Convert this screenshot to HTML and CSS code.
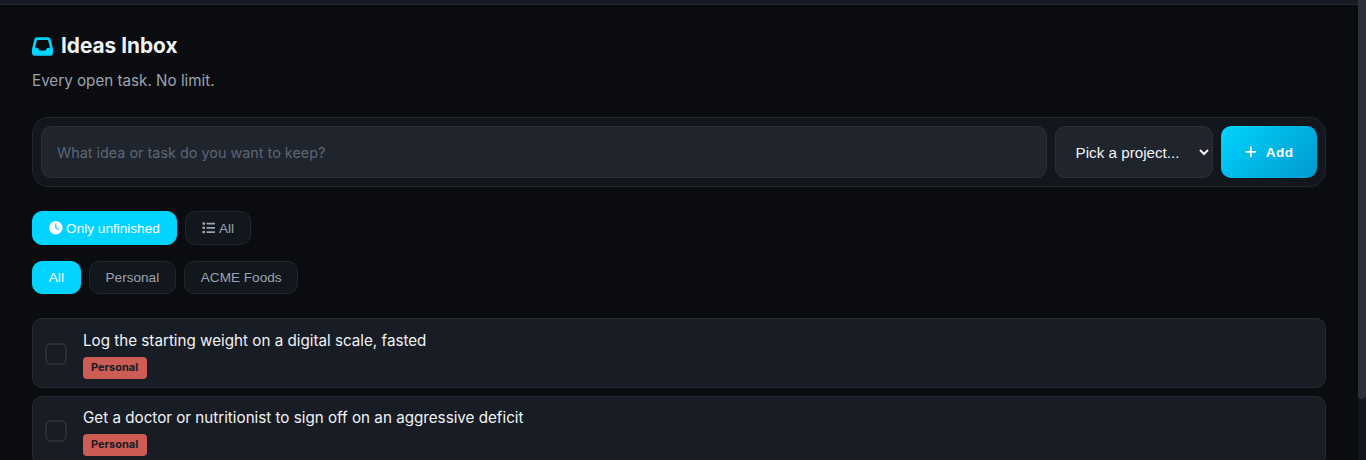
FILE: index.html
```html
<!DOCTYPE html>
<html lang="en">
<head>
    <meta charset="UTF-8">
    <meta name="viewport" content="width=device-width, initial-scale=1.0">
    <title>Ideas Inbox</title>
    <link rel="stylesheet" href="styles.css">
</head>
<body>

    <div class="view">
        <!-- Thin bar left over from the app header -->
        <div class="top-bar"></div>

        <main class="page">
            <h1 class="page-title">
                <svg class="title-icon" viewBox="0 0 512 512" aria-hidden="true"><path d="M121 32C91.6 32 66 52 58.9 80.5L1.9 308.4C.6 313.5 0 318.7 0 323.9V416c0 35.3 28.7 64 64 64H448c35.3 0 64-28.7 64-64V323.9c0-5.2-.6-10.4-1.9-15.5l-57-227.9C446 52 420.4 32 391 32H121zm0 64H391l48 192H387.8c-12.1 0-23.2 6.8-28.6 17.7l-14.3 28.6c-5.4 10.8-16.5 17.7-28.6 17.7H195.8c-12.1 0-23.2-6.8-28.6-17.7l-14.3-28.6c-5.4-10.8-16.5-17.7-28.6-17.7H73L121 96z"/></svg>
                Ideas Inbox
            </h1>
            <p class="page-sub">Every open task. No limit.</p>

            <!-- New task form -->
            <form class="add-form">
                <input class="add-input" type="text" placeholder="What idea or task do you want to keep?">
                <select class="add-select">
                    <option>Pick a project...</option>
                </select>
                <button class="add-button" type="button">
                    <svg class="plus-icon" viewBox="0 0 448 512" aria-hidden="true"><path d="M256 80c0-17.7-14.3-32-32-32s-32 14.3-32 32V224H48c-17.7 0-32 14.3-32 32s14.3 32 32 32H192V432c0 17.7 14.3 32 32 32s32-14.3 32-32V288H400c17.7 0 32-14.3 32-32s-14.3-32-32-32H256V80z"/></svg>
                    Add
                </button>
            </form>

            <!-- Filters -->
            <div class="filter-row">
                <button class="chip chip-active" type="button">
                    <svg class="chip-icon" viewBox="0 0 512 512" aria-hidden="true"><path d="M256 0a256 256 0 1 1 0 512A256 256 0 1 1 256 0zM232 120V256c0 8 4 15.5 10.7 20l96 64c11 7.4 25.9 4.4 33.3-6.7s4.4-25.9-6.7-33.3L280 243.2V120c0-13.3-10.7-24-24-24s-24 10.7-24 24z"/></svg>
                    Only unfinished
                </button>
                <button class="chip" type="button">
                    <svg class="chip-icon" viewBox="0 0 512 512" aria-hidden="true"><path d="M40 48C26.7 48 16 58.7 16 72v48c0 13.3 10.7 24 24 24H88c13.3 0 24-10.7 24-24V72c0-13.3-10.7-24-24-24H40zM192 64c-17.7 0-32 14.3-32 32s14.3 32 32 32H480c17.7 0 32-14.3 32-32s-14.3-32-32-32H192zm0 160c-17.7 0-32 14.3-32 32s14.3 32 32 32H480c17.7 0 32-14.3 32-32s-14.3-32-32-32H192zm0 160c-17.7 0-32 14.3-32 32s14.3 32 32 32H480c17.7 0 32-14.3 32-32s-14.3-32-32-32H192zM16 232v48c0 13.3 10.7 24 24 24H88c13.3 0 24-10.7 24-24V232c0-13.3-10.7-24-24-24H40c-13.3 0-24 10.7-24 24zM40 368c-13.3 0-24 10.7-24 24v48c0 13.3 10.7 24 24 24H88c13.3 0 24-10.7 24-24V392c0-13.3-10.7-24-24-24H40z"/></svg>
                    All
                </button>
            </div>
            <div class="filter-row project-row">
                <button class="chip chip-pad chip-active" type="button">All</button>
                <button class="chip chip-pad" type="button">Personal</button>
                <button class="chip chip-pad" type="button">ACME Foods</button>
            </div>

            <!-- Task list -->
            <ul class="task-list">
                <li class="task">
                    <span class="task-check"></span>
                    <div class="task-body">
                        <div class="task-text">Log the starting weight on a digital scale, fasted</div>
                        <span class="task-tag">Personal</span>
                    </div>
                </li>
                <li class="task">
                    <span class="task-check"></span>
                    <div class="task-body">
                        <div class="task-text">Get a doctor or nutritionist to sign off on an aggressive deficit</div>
                        <span class="task-tag">Personal</span>
                    </div>
                </li>
            </ul>
        </main>
    </div>

    <!-- Scrollbar as the app styles it -->
    <div class="scroll-rail">
        <div class="scroll-thumb"></div>
    </div>

</body>
</html>
```

FILE: styles.css
```css
body {
    display: flex;
    height: 100vh;
    margin: 0;
    overflow: hidden;
    background-color: #0a0c10;
    color: #f0f3f6;
    font-family: 'Inter', 'Liberation Sans', sans-serif;
}

.view {
    flex: 1;
    min-width: 0;
    overflow: hidden;
}

.scroll-rail {
    flex: none;
    width: 8px;
    background-color: #12161d;
}

.scroll-thumb {
    height: 399px;
    background-color: #2b303b;
    border-radius: 0 0 4px 4px;
}

.top-bar {
    height: 4px;
    background-color: #151a23;
    border-bottom: 1px solid #262b36;
}

.page {
    padding: 30px 32px 0;
}

.page-title {
    display: flex;
    align-items: center;
    gap: 8px;
    margin: 0;
    font-size: 20.8px;
    font-weight: 700;
    line-height: 22px;
}

.title-icon {
    width: 21px;
    height: 21px;
    fill: #00d4ff;
}

.page-sub {
    margin: 14px 0 0;
    font-size: 15.2px;
    line-height: 20px;
    color: #9ca3af;
}

/* add form */
.add-form {
    display: flex;
    gap: 8px;
    margin-top: 26px;
    padding: 8px;
    background-color: #12161d;
    border: 1px solid #21262f;
    border-radius: 16px;
}

.add-input {
    flex: 1;
    height: 52px;
    box-sizing: border-box;
    padding: 0 15px;
    background-color: #1f242d;
    border: 1px solid #2a2f39;
    border-radius: 10px;
    color: #f0f3f6;
    font-family: 'Inter', 'Liberation Sans', sans-serif;
    font-size: 14.4px;
}

.add-input::placeholder {
    color: #5c6675;
}

.add-select {
    width: 158px;
    height: 52px;
    padding: 0 16px;
    background-color: #1f242d;
    border: 1px solid #2a2f39;
    border-radius: 10px;
    color: #f0f3f6;
    font-family: 'Liberation Sans', sans-serif;
    font-size: 15.2px;
}

.add-button {
    display: flex;
    align-items: center;
    justify-content: center;
    gap: 8px;
    width: 96.4px;
    height: 52px;
    background: linear-gradient(135deg, #00d4ff, #0099cc);
    border: 0;
    border-radius: 10px;
    color: #fff;
    font-family: 'Liberation Sans', sans-serif;
    font-size: 13.6px;
    font-weight: 700;
    letter-spacing: 0.5px;
}

.plus-icon {
    width: 13.6px;
    height: 13.6px;
    fill: #fff;
}

/* filter chips */
.filter-row {
    display: flex;
    gap: 8px;
    margin-top: 24px;
}

.project-row {
    margin-top: 16px;
}

.chip {
    display: flex;
    align-items: center;
    gap: 3.5px;
    height: 34px;
    padding: 0 16px;
    background-color: #12161d;
    border: 1px solid #21262f;
    border-radius: 10px;
    color: #9ca3af;
    font-family: 'Liberation Sans', sans-serif;
    font-size: 13.6px;
}

.chip-pad {
    height: 33px;
    padding: 0 15.8px;
}

.chip-active {
    background-color: #00d4ff;
    border-color: #00d4ff;
    color: #fff;
}

.chip-icon {
    width: 13.6px;
    height: 13.6px;
    fill: currentColor;
}

/* tasks */
.task-list {
    display: flex;
    flex-direction: column;
    gap: 8px;
    margin: 24px 0 0;
    padding: 0;
    list-style: none;
}

.task {
    display: flex;
    align-items: center;
    gap: 16px;
    height: 69.6px;
    box-sizing: border-box;
    padding: 2px 12px 0;
    background-color: #181c24;
    border: 1px solid #262b35;
    border-radius: 10px;
}

.task-check {
    width: 22px;
    height: 22px;
    box-sizing: border-box;
    background-color: #181c24;
    border: 2px solid #2a2f39;
    border-radius: 6px;
}

.task-text {
    font-size: 15.2px;
    line-height: 24px;
}

.task-tag {
    display: inline-block;
    margin-top: 4px;
    padding: 0 8.5px 0 8px;
    height: 22px;
    line-height: 21px;
    background-color: #cd5c54;
    border-radius: 4px;
    color: #181c24;
    font-size: 11px;
    font-weight: 700;
}
```
